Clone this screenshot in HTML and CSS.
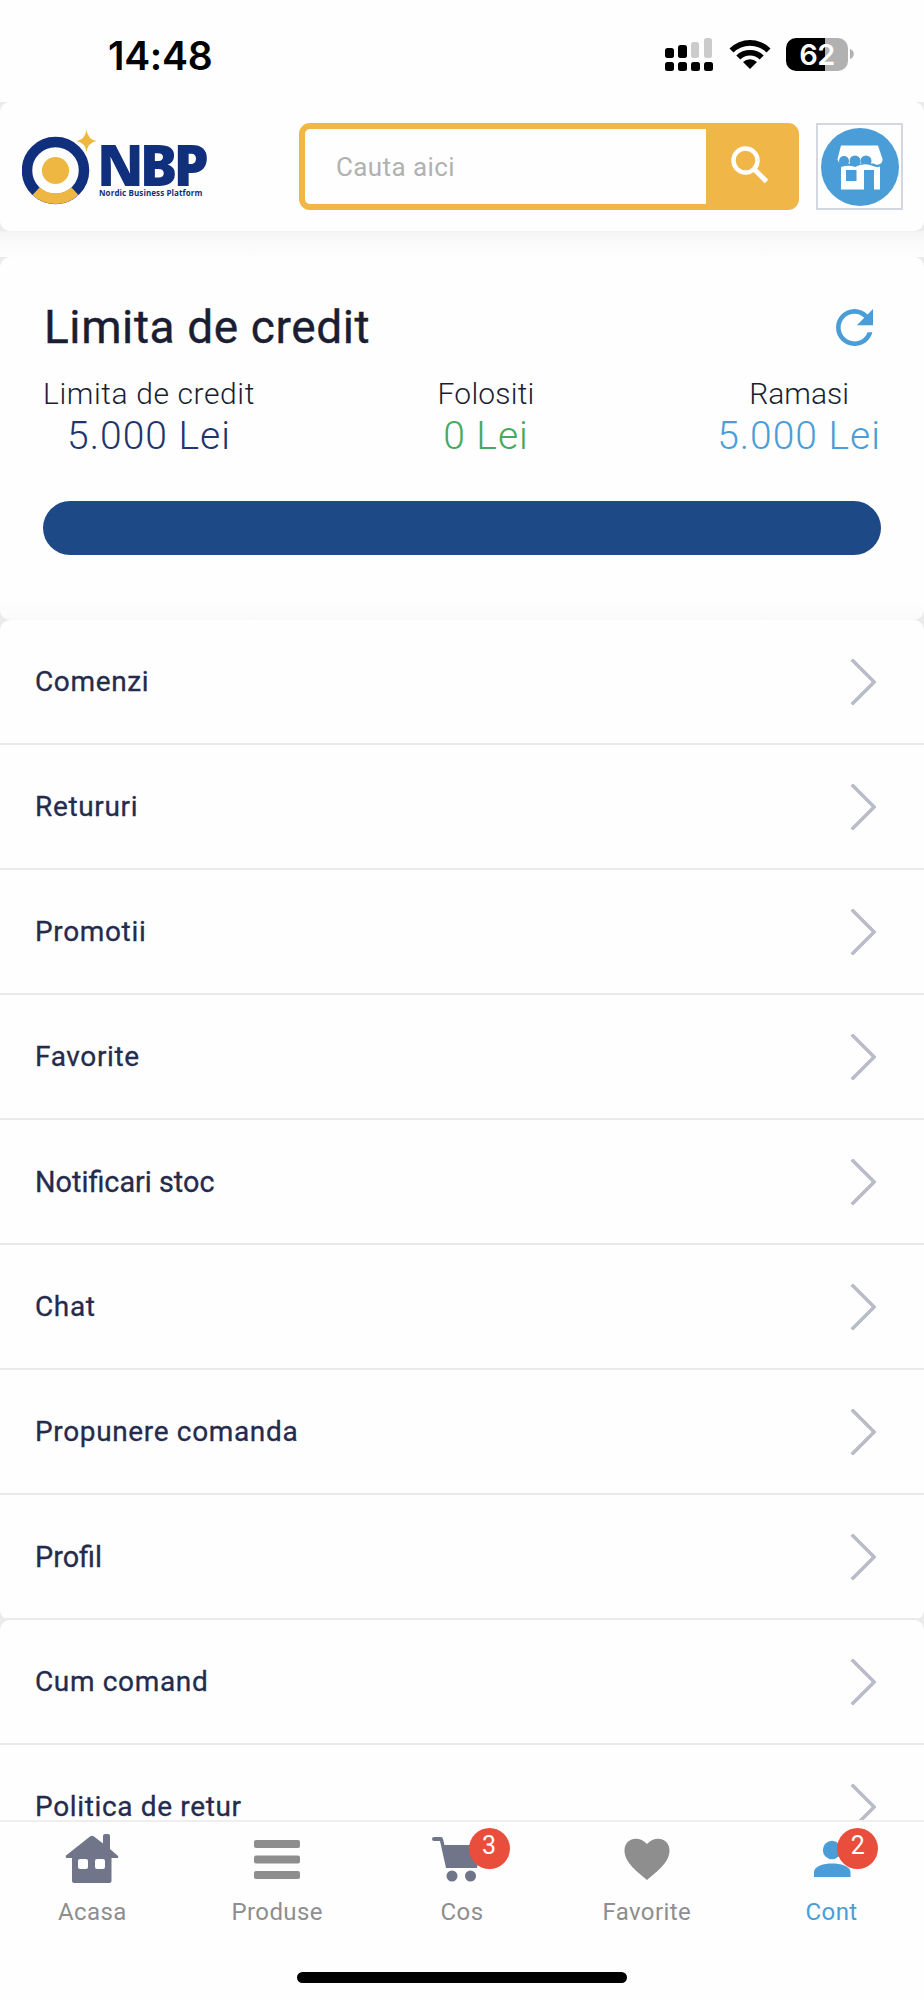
FILE: index.html
```html
<!DOCTYPE html>
<html lang="ro">
<head>
    <meta charset="UTF-8">
    <meta name="viewport" content="width=device-width, initial-scale=1.0">
    <title>Cont - NBP</title>
    <link rel="stylesheet" href="styles.css">
</head>
<body>
    <div class="status-bar">
        <span class="clock">14:48</span>
        <svg class="signal" width="48" height="34" viewBox="0 0 48 34">
            <rect x="0" y="10" width="9" height="10" rx="2.5"/>
            <rect x="13" y="7" width="9" height="13" rx="2.5"/>
            <rect x="26" y="4" width="8" height="16" rx="2.5" fill="#cbcbcb"/>
            <rect x="39" y="0" width="8" height="20" rx="2.5" fill="#cbcbcb"/>
            <rect x="0" y="24" width="9" height="9" rx="2.5"/>
            <rect x="13" y="24" width="9" height="9" rx="2.5"/>
            <rect x="26" y="24" width="9" height="9" rx="2.5"/>
            <rect x="39" y="24" width="9" height="9" rx="2.5"/>
        </svg>
        <svg class="wifi" width="42" height="31" viewBox="0 0 42 31">
            <path d="M0.5 9.5A29 29 0 0 1 41.5 9.5L37.5 13.5A23.5 23.5 0 0 0 4.5 13.5Z"/>
            <path d="M7.3 16.5A19.5 19.5 0 0 1 34.7 16.5L30.7 20.5A13.8 13.8 0 0 0 11.3 20.5Z"/>
            <path d="M14 23A10 10 0 0 1 28 23L21 30Z"/>
        </svg>
        <div class="battery"><span>62</span></div>
        <svg class="battery-tip" width="5" height="10" viewBox="0 0 5 10"><path d="M0 0C5 1.5 5 8.5 0 10Z" fill="#b1b1b1"/></svg>
    </div>

    <header class="header">
        <div class="logo">
            <svg width="76" height="76" viewBox="0 0 76 76">
                <circle cx="33.5" cy="40.5" r="28.5" fill="none" stroke="#102f7d" stroke-width="10.5"/>
                <path d="M14.1 61.1A28.5 28.5 0 0 0 52.9 61.1" fill="none" stroke="#eeb742" stroke-width="10.5"/>
                <circle cx="33.5" cy="40.5" r="13.6" fill="#eeb742"/>
                <path d="M64.5 0Q66 9.5 74.5 11Q66 12.5 64.5 22Q63 12.5 54.5 11Q63 9.5 64.5 0Z" fill="#eeb742"/>
            </svg>
            <div class="logo-text">
                <strong>NBP</strong>
                <small>Nordic Business Platform</small>
            </div>
        </div>
        <div class="search">
            <input type="text" placeholder="Cauta aici">
            <button>
                <svg width="38" height="38" viewBox="0 0 38 38" fill="none" stroke="#fff">
                    <circle cx="14.5" cy="14.5" r="12" stroke-width="4.5"/>
                    <path d="M23.5 23.5L35.5 35.5" stroke-width="5"/>
                </svg>
            </button>
        </div>
        <div class="store">
            <svg width="78" height="78" viewBox="0 0 78 78">
                <circle cx="39" cy="39" r="39" fill="#4b9dd7"/>
                <path d="M20 17.5H57L61.5 31A5.2 5.2 0 0 1 53 35.5H22A5 5 0 0 1 16.5 31Z" fill="#fff"/>
                <g fill="#4b9dd7">
                    <circle cx="23" cy="33" r="5"/>
                    <circle cx="34" cy="33" r="5.5"/>
                    <circle cx="45" cy="33" r="5.5"/>
                </g>
                <path d="M20 39Q28 36.5 34 39Q43 34 52 38Q56 40 59 38.5V61.5H53V42H43V61.5H20ZM25 42V53H35.5V42Z" fill="#fff" fill-rule="evenodd"/>
            </svg>
        </div>
    </header>
    <div class="header-shade"></div>

    <section class="credit">
        <div class="credit-head">
            <h1>Limita de credit</h1>
            <svg width="37" height="37" viewBox="4 4 16 16" fill="#4b9dd7">
                <path d="M17.65 6.35C16.2 4.9 14.21 4 12 4c-4.42 0-7.99 3.58-7.99 8s3.57 8 7.99 8c3.73 0 6.84-2.55 7.73-6h-2.08c-.82 2.33-3.04 4-5.65 4-3.31 0-6-2.69-6-6s2.69-6 6-6c1.66 0 3.14.69 4.22 1.78L13 11h7V4l-2.35 2.35z"/>
            </svg>
        </div>
        <div class="amounts">
            <div class="amount total"><span>Limita de credit</span><b>5.000 Lei</b></div>
            <div class="amount used"><span>Folositi</span><b>0 Lei</b></div>
            <div class="amount left"><span>Ramasi</span><b>5.000 Lei</b></div>
        </div>
        <div class="progress"></div>
    </section>

    <main>
        <ul class="menu">
            <li>Comenzi<i></i></li>
            <li>Retururi<i></i></li>
            <li>Promotii<i></i></li>
            <li>Favorite<i></i></li>
            <li class="ligature">Notificari stoc<i></i></li>
            <li>Chat<i></i></li>
            <li>Propunere comanda<i></i></li>
            <li class="ligature">Profil<i></i></li>
        </ul>
        <ul class="menu">
            <li>Cum comand<i></i></li>
            <li>Politica de retur<i></i></li>
        </ul>
    </main>

    <nav class="tabs">
        <a class="tab">
            <svg width="54" height="50" viewBox="0 0 54 50" fill="#70758a">
                <path d="M25 2.5Q27 1 29 2.5L38 9.5V2Q38 0 40 0H43Q45 0 45 2V15L53 22Q54 24 52 24H46.5V47Q46.5 49 44.5 49H9Q7 49 7 47V24H2Q0 24 1 21.5Z"/>
                <rect x="13" y="25" width="10" height="10" rx="2" fill="#fefefe"/>
                <rect x="30" y="25" width="10" height="10" rx="2" fill="#fefefe"/>
            </svg>
            <span>Acasa</span>
        </a>
        <a class="tab">
            <svg width="46" height="50" viewBox="0 0 46 50" fill="#8e8e8e">
                <rect y="6" width="46" height="8" rx="2"/>
                <rect y="21.5" width="46" height="8" rx="2"/>
                <rect y="37" width="46" height="8" rx="2"/>
            </svg>
            <span>Produse</span>
        </a>
        <a class="tab">
            <svg width="60" height="50" viewBox="0 0 60 50" fill="#70758a">
                <path d="M2 3H9Q10.5 3 11 5L12.5 11H49L45 34H14L8 7H2Q0 7 0 5Q0 3 2 3Z"/>
                <circle cx="20" cy="42" r="5.5"/>
                <circle cx="38.5" cy="42" r="5.5"/>
            </svg>
            <em>3</em>
            <span>Cos</span>
        </a>
        <a class="tab">
            <svg width="46" height="50" viewBox="0 0 46 50" fill="#8e8e8e">
                <path d="M23 46C14 38 0.5 29 0.5 16.5C0.5 4 15 1 23 10C31 1 45.5 4 45.5 16.5C45.5 29 32 38 23 46Z"/>
            </svg>
            <span>Favorite</span>
        </a>
        <a class="tab active">
            <svg width="38" height="50" viewBox="0 0 38 50" fill="#4b9dd7">
                <circle cx="19" cy="16" r="9.2"/>
                <path d="M1 43V38C1 32 11 29.5 19 29.5S37.5 32 37.5 38V43Z"/>
            </svg>
            <em>2</em>
            <span>Cont</span>
        </a>
        <div class="home-bar"></div>
    </nav>
</body>
</html>
```
FILE: styles.css
```css
* {
    box-sizing: border-box;
}
body {
    margin: 0;
    height: 2000px;
    display: flex;
    flex-direction: column;
    overflow: hidden;
    background: #ebebeb;
    font-family: Roboto, sans-serif;
    color: #1b1e32;
}
.status-bar {
    height: 102px;
    display: flex;
    align-items: flex-start;
    padding: 38px 0 0 108px;
    background: #fefefe;
    flex: none;
}
.clock {
    width: 557px;
    margin-top: -5px;
    font: 600 39px/46px Inter, sans-serif;
    letter-spacing: -0.3px;
    color: #000;
}
.wifi {
    margin: 1px 0 0 16px;
}
.battery {
    width: 62px;
    height: 33px;
    margin-left: 15px;
    border-radius: 10px;
    background: linear-gradient(90deg, #000 39px, #b1b1b1 39px);
    color: #fff;
    font: 600 29px/33px Inter, sans-serif;
    text-align: center;
    letter-spacing: -0.5px;
}
.battery-tip {
    margin: 11px 0 0 2px;
}
.header {
    height: 129px;
    display: flex;
    align-items: center;
    padding: 0 21px 0 22px;
    background: #fefefe;
    border-radius: 10px;
    flex: none;
}
.header-shade {
    height: 26px;
    background: linear-gradient(#f3f3f4, #fafafa 40%, #fdfdfd);
    flex: none;
}
.logo {
    width: 277px;
    display: flex;
    margin-top: 3px;
}
.logo-text {
    width: 120px;
    margin-top: 13px;
    color: #102f7d;
    font-family: "Open Sans", sans-serif;
    white-space: nowrap;
}
.logo-text strong {
    display: block;
    margin-left: -1px;
    font-size: 56px;
    font-weight: 800;
    line-height: 42px;
    letter-spacing: -4px;
}
.logo-text small {
    display: block;
    margin: 3px 0 0 1px;
    font-size: 8px;
    font-weight: 700;
    line-height: 9px;
    letter-spacing: 0.1px;
}
.search {
    width: 500px;
    height: 87px;
    display: flex;
    border: 6px solid #f1b648;
    border-radius: 11px;
    background: #f1b648;
}
.search input {
    width: 401px;
    border: 0;
    padding: 0 31px;
    border-radius: 5px 0 0 5px;
    background: #fefefe;
    font: 26px Roboto, sans-serif;
    letter-spacing: 0.4px;
}
.search input::placeholder {
    color: #b1b1b1;
}
.search button {
    flex: 1;
    padding: 0;
    border: 0;
    background: none;
}
.store {
    width: 87px;
    height: 87px;
    margin-left: 17px;
    padding: 3px;
    border: 2px solid #d3d7e2;
}
.credit {
    height: 363px;
    padding: 0 43px;
    background: linear-gradient(#fefefe 345px, #fafafa);
    border-radius: 10px;
    flex: none;
}
.credit-head {
    display: flex;
    align-items: center;
    justify-content: space-between;
    height: 115px;
    padding: 25px 8px 0 1px;
}
h1 {
    margin: 0;
    font-size: 46px;
    font-weight: 400;
    letter-spacing: 0.6px;
    -webkit-text-stroke: 0.4px;
}
.amounts {
    display: flex;
    justify-content: space-between;
    padding-top: 1px;
}
.amount {
    text-align: center;
}
.amount span {
    display: block;
    font-size: 30px;
    font-weight: 300;
    line-height: 42px;
}
.amount b {
    display: block;
    font-size: 39px;
    font-weight: 300;
    line-height: 42px;
    letter-spacing: 1px;
}
.total span { letter-spacing: 0.6px; }
.used span { letter-spacing: 0.2px; }
.total b { color: #21356d; }
.used b { color: #46a95f; }
.left b { color: #4b9dd7; }
.progress {
    height: 54px;
    margin-top: 44px;
    border-radius: 27px;
    background: #1d4a87;
}
main {
    flex: 1;
    min-height: 0;
    overflow: hidden;
}
.menu {
    margin: 0;
    padding: 0;
    list-style: none;
    background: #fefefe;
    border-radius: 10px;
    overflow: hidden;
}
.menu li {
    height: 125px;
    display: flex;
    align-items: center;
    justify-content: space-between;
    padding: 0 54px 0 35px;
    border-bottom: 2px solid #eaeaeb;
    font-size: 28px;
    letter-spacing: 0.65px;
    -webkit-text-stroke: 0.3px;
    color: #252b4d;
}
/* letter-spacing would break up the fi ligature */
.menu .ligature {
    font-size: 28.8px;
    letter-spacing: normal;
}
.menu i {
    width: 34px;
    height: 34px;
    border: solid #babdc9;
    border-width: 4.5px 4.5px 0 0;
    border-radius: 2px;
    transform: rotate(45deg);
}
.tabs {
    position: relative;
    height: 180px;
    display: flex;
    background: #fefefe;
    border-top: 2px solid #eee;
    flex: none;
}
.tab {
    position: relative;
    flex: 1;
    display: flex;
    flex-direction: column;
    align-items: center;
    padding-top: 12px;
    color: #8e8e8e;
}
.tab span {
    margin-top: 14px;
    font-size: 24px;
    line-height: 28px;
    letter-spacing: 0.4px;
}
.tab em {
    position: absolute;
    left: 99px;
    top: 6px;
    width: 41px;
    height: 41px;
    border-radius: 50%;
    background: #e94e3d;
    color: #fff;
    font: 25px/35px Roboto, sans-serif;
    text-align: center;
}
.tab.active {
    color: #4b9dd7;
}
.tab.active em {
    left: 98px;
}
.home-bar {
    position: absolute;
    left: 297px;
    bottom: 17px;
    width: 330px;
    height: 11px;
    border-radius: 6px;
    background: #000;
}
```
